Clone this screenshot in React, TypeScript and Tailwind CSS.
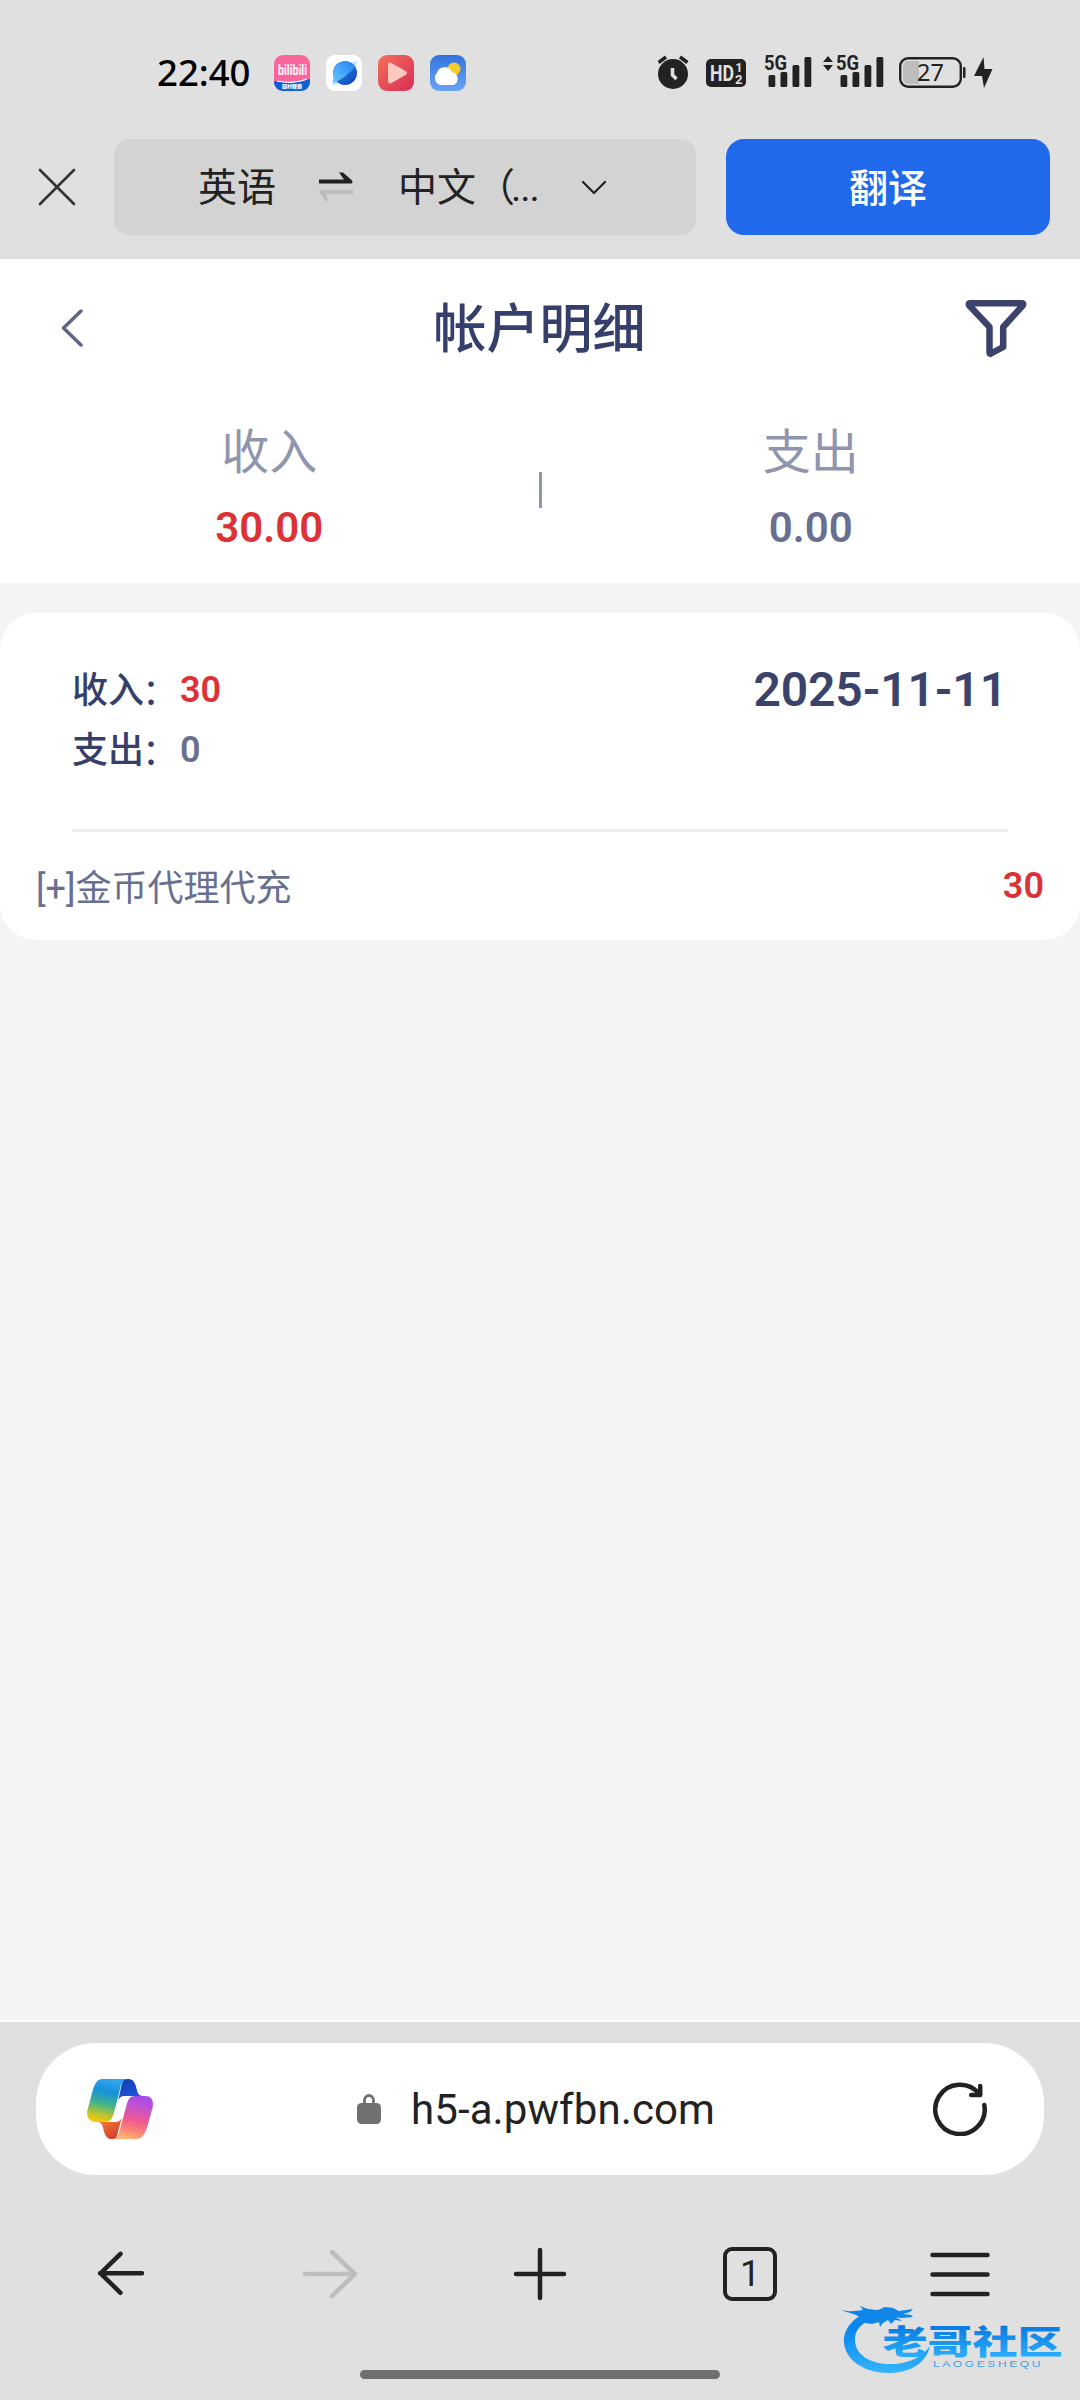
type Item = {
  name: string;
  amount: number;
};

type Day = {
  date: string;
  income: number;
  expense: number;
  items: Item[];
};

const days: Day[] = [
  { date: '2025-11-11', income: 30, expense: 0, items: [{ name: '[+]金币代理代充', amount: 30 }] },
];

function AppIcons() {
  return (
    <div className="ml-6 flex gap-4">
      <svg className="h-9 w-9 overflow-visible" viewBox="0 0 36 36">
        <defs>
          <clipPath id="biliClip"><rect width="36" height="36" rx="9" /></clipPath>
        </defs>
        <g clipPath="url(#biliClip)">
          <rect width="36" height="36" fill="#f8669b" />
          <path d="M0 26c10 2 24 2 36-2v12H0z" fill="#0d5fd8" />
          <path d="M3 26c9 2 20 2 30-2" stroke="#fff" strokeWidth="1.2" fill="none" />
        </g>
        <text x="4" y="20" fontSize="15" fontWeight="700" fill="#fff" textLength="29" lengthAdjust="spacingAndGlyphs" fontFamily="Roboto">bilibili</text>
        <text x="8" y="32.500" fontSize="5" fontWeight="900" fill="#fff" textLength="20" fontFamily="Noto Sans CJK SC">回村联赛</text>
      </svg>
      <svg className="h-9 w-9" viewBox="0 0 36 36">
        <defs>
          <linearGradient id="planet" x1="0" y1="0" x2="1" y2="1">
            <stop offset="0" stopColor="#2f9bf5" />
            <stop offset="1" stopColor="#0b3fb4" />
          </linearGradient>
          <linearGradient id="planetTop" x1="1" y1="0" x2="0" y2="1">
            <stop offset="0" stopColor="#1d84f0" />
            <stop offset="1" stopColor="#6cc4ff" />
          </linearGradient>
        </defs>
        <rect width="36" height="36" rx="9" fill="#fff" />
        <path d="M25 8c4-2 7-3 6-1 0 4-13 19-22 23-3 1-4-1-2-5z" fill="#c2e5ff" />
        <circle cx="19" cy="18" r="12" fill="url(#planet)" />
        <path d="M29 11.500A12 12 0 0 0 7.500 21L7 28C16 25 25 17 29 11.500z" fill="url(#planetTop)" />
      </svg>
      <svg className="h-9 w-9" viewBox="0 0 36 36">
        <defs>
          <linearGradient id="video" x1="0" y1="0" x2="1" y2="1">
            <stop offset="0" stopColor="#f5705a" />
            <stop offset="1" stopColor="#d92c56" />
          </linearGradient>
        </defs>
        <rect width="36" height="36" rx="9" fill="url(#video)" />
        <path d="M12 9.500v17l15-8.500z" fill="#fdc9bf" stroke="#fdc9bf" strokeWidth="4" strokeLinejoin="round" />
      </svg>
      <svg className="h-9 w-9" viewBox="0 0 36 36">
        <defs>
          <linearGradient id="sky" x1="0" y1="0" x2="0" y2="1">
            <stop offset="0" stopColor="#3273dc" />
            <stop offset="1" stopColor="#6aa2f8" />
          </linearGradient>
        </defs>
        <rect width="36" height="36" rx="9" fill="url(#sky)" />
        <circle cx="24" cy="14" r="6.500" fill="#f7cb2d" />
        <path d="M12 30a7 7 0 0 1-5-12 8 8 0 0 1 15-1 7 7 0 0 1 2 13z" fill="#fff" />
      </svg>
    </div>
  );
}

function SignalBars() {
  return (
    <svg className="h-[40px] w-[46px] overflow-visible" viewBox="0 -7 46 40" fill="#222">
      <text x="-1" y="15.500" fontSize="20.500" fontWeight="700" fontFamily="Roboto" textLength="23" lengthAdjust="spacingAndGlyphs">5G</text>
      <rect x="3.500" y="21" width="6.800" height="12" rx="1.500" />
      <rect x="15.500" y="18" width="6.800" height="15" rx="1.500" />
      <rect x="27.500" y="11" width="6.800" height="22" rx="1.500" />
      <rect x="39.500" y="3" width="6.800" height="30" rx="1.500" />
    </svg>
  );
}

function StatusBar() {
  return (
    <div className="flex h-[139px] items-start justify-between pr-[87px] pl-[157px]">
      <div className="flex pt-[55px]">
        <span className="w-[93px] font-['Noto_Sans',sans-serif] text-[36.500px] leading-[35px] font-medium text-black">22:40</span>
        <AppIcons />
      </div>
      <div className="flex pt-[54px]">
        {/* Alarm */}
        <svg className="mt-px h-[34px] w-[32px]" viewBox="0 0 32 34" fill="none">
          <circle cx="15" cy="19" r="15" fill="#222" />
          <path d="M.5 7.500 8 2M22 2l7.500 5.500" stroke="#222" strokeWidth="3.500" />
          <path d="M14.500 13v7l4 4" stroke="#e0e0e0" strokeWidth="3.500" />
        </svg>
        <svg className="mt-[5px] ml-[16px] h-7 w-10" viewBox="0 0 40 28">
          <rect width="40" height="28" rx="5" fill="#222" />
          <g fill="#e0e0e0" fontFamily="Roboto" fontWeight="700">
            <text x="4" y="22" fontSize="22" textLength="24" lengthAdjust="spacingAndGlyphs">HD</text>
            <text x="29.500" y="12.500" fontSize="12">1</text>
            <text x="29" y="25" fontSize="13">2</text>
          </g>
        </svg>
        <div className="-mt-[7px] ml-[19.500px]"><SignalBars /></div>
        <svg className="mt-[2px] ml-[12px] h-4 w-[10px]" viewBox="0 0 10 16" fill="#222">
          <path d="M0 6 5 0l5 6zM0 9h10l-5 6z" />
        </svg>
        <div className="-mt-[7px] ml-[4px]"><SignalBars /></div>
        <svg className="mt-[3px] ml-[16px] h-[31px] w-[67px]" viewBox="0 0 67 31">
          <path d="M9 4h11v23H9a5 5 0 0 1-5-5V9a5 5 0 0 1 5-5z" fill="#bdbdbd" />
          <rect x="1.200" y="1.200" width="60.600" height="28.600" rx="8" fill="none" stroke="#222" strokeWidth="2.400" />
          <rect x="64" y="10" width="2.500" height="11" rx="1" fill="#222" />
          <text x="31.500" y="23.500" textAnchor="middle" fontSize="23.500" fontFamily="Noto Sans" fill="#222">27</text>
        </svg>
        <svg className="mt-[3px] ml-[8px] h-[31px] w-[19px]" viewBox="0 0 19 31" fill="#222">
          <path d="M9.500 0 0 19h8L10 31l8.500-19H10.500z" />
        </svg>
      </div>
    </div>
  );
}

function TranslateBar() {
  return (
    <div className="flex h-[120px] items-start text-[39px] leading-[98px] text-[#222]">
      <svg className="mt-[29px] ml-[38px] h-[38px] w-[38px]" viewBox="0 0 38 38" fill="none" stroke="#333" strokeWidth="2.600" strokeLinecap="round">
        <path d="M2 2l34 34M36 2 2 36" />
      </svg>
      <div className="ml-[38px] flex h-24 w-[582px] items-center rounded-[15px] bg-[#d3d3d3]">
        <span className="ml-[84px] w-[78px] pt-[2px]">英语</span>
        <svg className="ml-[43px] h-8 w-[34px]" viewBox="0 0 34 32">
          <path d="M0 8.500h25L20 1.500h4L33 9.500c1 1.500.5 3-1 3H0z" fill="#222" />
          <path d="M34 19H2c-2 0-2.500 1.500-1.500 2.500L7 30h2l-2-7h27z" fill="#bbb" />
        </svg>
        <span className="ml-[45px] w-[145px] pt-[2px] whitespace-nowrap">中文（<span className="-ml-[4px] font-[Roboto] tracking-[-1px]">...</span></span>
        <svg className="ml-[38px] h-[15px] w-[26px]" viewBox="0 0 26 15" fill="none" stroke="#222" strokeWidth="2.200" strokeLinecap="round" strokeLinejoin="round">
          <path d="M2 2l11 11L24 2" />
        </svg>
      </div>
      <button className="ml-[30px] h-24 w-[324px] rounded-[18px] bg-[#2169eb] pt-px font-medium text-white">翻译</button>
    </div>
  );
}

function PageHeader() {
  return (
    <header className="h-[324px] bg-white">
      <div className="flex h-[138px] items-center justify-between pr-[53px] pl-[61px]">
        <svg className="h-[38px] w-[22px]" viewBox="0 0 22 38" fill="none" stroke="#5f6789" strokeWidth="3.500" strokeLinecap="round" strokeLinejoin="round">
          <path d="M20 2 2.500 19 20 36" />
        </svg>
        <h1 className="ml-[31px] pt-[4px] text-[53px] leading-none font-medium text-[#363f6b]">帐户明细</h1>
        <svg className="h-[58px] w-[62px]" viewBox="0 0 62 58" fill="none" stroke="#3b436c" strokeWidth="6.500" strokeLinejoin="round">
          <path d="M5 4.300h52c1.500 0 1.500 1.500.5 2.500L38.200 28v20L26 54.500c-1 .5-1.500 0-1.500-1V28L4.500 6.800c-1-1-1-2.500.5-2.500z" />
        </svg>
      </div>
      <div className="flex text-center">
        <div className="flex-1 pt-[28px]">
          <p className="text-[48px] leading-[56px] text-[#9095ae]">收入</p>
          <p className="mt-[22px] text-[42px] leading-[50px] font-semibold text-[#dc3236]">30.00</p>
        </div>
        <div className="mt-[75px] h-9 w-[3px] bg-[#9095a9]" />
        <div className="flex-1 pt-[28px]">
          <p className="text-[48px] leading-[56px] text-[#9095ae]">支出</p>
          <p className="mt-[22px] text-[42px] leading-[50px] font-semibold text-[#686f91]">0.00</p>
        </div>
      </div>
    </header>
  );
}

function DayCard({ day }: { day: Day }) {
  return (
    <section className="mt-[30px] h-[327px] rounded-[36px] bg-white">
      <div className="mx-[72px] flex h-[219px] justify-between border-b-[3px] border-[#efefef] pt-[47px]">
        <div className="text-[36px] leading-[60px] font-medium text-[#363f6b]">
          <p className="flex">
            <span className="pt-[2px] leading-[58px]">收入</span>
            <span className="-ml-[2px] w-[38px] pt-[6px] leading-[54px] font-normal">：</span>
            <b className="font-semibold text-[#dc3236]">{day.income}</b>
          </p>
          <p className="flex">
            <span className="pt-[2px] leading-[58px]">支出</span>
            <span className="-ml-[2px] w-[38px] pt-[6px] leading-[54px] font-normal">：</span>
            <b className="font-semibold text-[#686f91]">{day.expense}</b>
          </p>
        </div>
        <p className="pr-px text-[48px] leading-[60px] font-semibold tracking-[-0.1px] text-[#3b436c]">{day.date}</p>
      </div>
      {day.items.map((item) => (
        <div key={item.name} className="flex h-[108px] items-center justify-between px-9 text-[36px] leading-none">
          <span className="pt-[6px] text-[#686f91]">{item.name}</span>
          <span className="font-semibold text-[#dc3236]">{item.amount}</span>
        </div>
      ))}
    </section>
  );
}

function CopilotLogo() {
  return (
    <svg className="h-[60px] w-[66px]" viewBox="0 0 66 60">
      <defs>
        <linearGradient id="cpLeft" x1="0.600" y1="0" x2="0.400" y2="1">
          <stop offset="0" stopColor="#35a6ee" />
          <stop offset="0.300" stopColor="#1590dc" />
          <stop offset="0.600" stopColor="#45b48a" />
          <stop offset="0.850" stopColor="#bcc52c" />
          <stop offset="1" stopColor="#f4c80c" />
        </linearGradient>
        <linearGradient id="cpBlue" x1="0.300" y1="0" x2="0.700" y2="1">
          <stop offset="0" stopColor="#1440b4" />
          <stop offset="1" stopColor="#2258e6" />
        </linearGradient>
        <linearGradient id="cpRight" x1="0.600" y1="0" x2="0.400" y2="1">
          <stop offset="0" stopColor="#a34cea" />
          <stop offset="0.250" stopColor="#c552cf" />
          <stop offset="0.550" stopColor="#f0598f" />
          <stop offset="0.800" stopColor="#fb8575" />
          <stop offset="1" stopColor="#fdb472" />
        </linearGradient>
        <linearGradient id="cpOrange" x1="0" y1="0" x2="0.700" y2="1">
          <stop offset="0" stopColor="#fb8b35" />
          <stop offset="1" stopColor="#d33c30" />
        </linearGradient>
      </defs>
      <path d="M36 0h5c4 0 6 2 7.500 6l2 7c1 3 3 4 6 4H38c-4 0-6 2-7 5z" fill="url(#cpBlue)" />
      <path d="M29 60h-4c-4 0-6-2-7.500-6l-2-7c-1-3-3-4-6-4H28c4 0 6-2 7-5z" fill="url(#cpOrange)" />
      <path d="M15 0h26c-4 0-6 3-7.500 8l-6 24c-2 8-4 11-10 11H9c-7 0-10-5-8.500-12L5 14C7.500 5 10 0 15 0z" fill="url(#cpLeft)" />
      <path d="M50 60H25c4 0 6-3 7.500-8l6.500-24c2-8 4-11 9-11H58c7 0 9 5 7.500 12L61 45c-2.500 10-6 15-11 15z" fill="url(#cpRight)" />
    </svg>
  );
}

function BrowserBar() {
  return (
    <footer className="mt-auto h-[380px] border-t-2 border-white bg-[#e0e0e0] pt-[21px] text-[#222]">
      <div className="mx-9 flex h-[132px] items-center rounded-[60px] bg-white">
        <div className="ml-[51px]"><CopilotLogo /></div>
        <svg className="ml-[204px] h-[30px] w-6" viewBox="0 0 24 30">
          <rect y="9" width="24" height="21" rx="4.500" fill="#707070" />
          <path d="M7.500 12V6.500a4.500 5 0 0 1 9 0V12" fill="none" stroke="#707070" strokeWidth="2.800" />
        </svg>
        <span className="ml-[30px] w-[309px] pt-px text-[42px] leading-[60px] tracking-[0.1px]">h5-a.pwfbn.com</span>
        <svg className="ml-[213px] h-[54px] w-[54px]" viewBox="0 0 54 54" fill="none" stroke="#222" strokeWidth="4.500" strokeLinecap="round" strokeLinejoin="round">
          <path d="M51.300 23A24.700 24.700 0 1 1 46.500 12.200M47.200 4v9h-9" />
        </svg>
      </div>
      <nav className="mx-[15px] mt-[39px] grid h-[120px] grid-cols-5 place-items-center">
        <svg className="h-[60px] w-[60px]" viewBox="0 0 60 60" fill="none" stroke="#222" strokeWidth="4.500" strokeLinecap="round" strokeLinejoin="round">
          <path d="M52 29.300H10M30.500 9.800 10.500 29.300l20 19.500" />
        </svg>
        <svg className="h-[60px] w-[60px]" viewBox="0 0 60 60" fill="none" stroke="#bebebe" strokeWidth="4.500" strokeLinecap="round" strokeLinejoin="round">
          <path d="M5 30h50M32 8l23 22-23 22" />
        </svg>
        <svg className="h-[60px] w-[60px]" viewBox="0 0 60 60" fill="none" stroke="#222" strokeWidth="4.500" strokeLinecap="round">
          <path d="M6 30h48M30 6v48" />
        </svg>
        <span className="h-[54px] w-[54px] rounded-[9px] border-[4.500px] border-[#222] text-center text-[36px] leading-[47px]">1</span>
        <svg className="h-[60px] w-[60px]" viewBox="0 0 60 60" fill="none" stroke="#222" strokeWidth="4.500" strokeLinecap="round">
          <path d="M2.500 11h55M2.500 30.500h55M2.500 50h55" />
        </svg>
      </nav>
      <div className="mx-auto mt-[36px] h-[9px] w-[360px] rounded-full bg-[#707070]" />
    </footer>
  );
}

function Watermark() {
  return (
    <svg className="absolute right-[14px] bottom-[24px] h-[74px] w-[226px]" viewBox="0 0 226 74">
      <defs>
        <linearGradient id="wm" gradientUnits="userSpaceOnUse" x1="0" y1="0" x2="0" y2="72">
          <stop offset="0" stopColor="#1484e6" />
          <stop offset="0.400" stopColor="#0b88ee" />
          <stop offset="1" stopColor="#36b5fb" />
        </linearGradient>
        <linearGradient id="wmText" gradientUnits="userSpaceOnUse" x1="0" y1="25" x2="0" y2="54">
          <stop offset="0" stopColor="#0a7be2" />
          <stop offset="1" stopColor="#28adfb" />
        </linearGradient>
      </defs>
      <g fill="url(#wm)">
        {/* Dragon body and head */}
        <path d="M34 8C14 14 3 26 4 41c2 18 21 30 45 30 20 0 37-9 41-27-8 11-20 17-36 18-22 1-38-8-39-23C14 27 23 20 36 16z" />
        <path d="M2 8c7 2 14 1 21 0l-3-4 8 3 10 1 7-3 8 1 6 3 14-2-3 3-7 2 8 1 2 2-12 1-5-1 6 4-7-1-4 4-3-4-5 3-3 4-1-5-7 2-7-1C18 10 8 12 2 8z" />
      </g>
      <text x="42.500" y="52" fontSize="33" fontWeight="900" fill="url(#wmText)" textLength="180" lengthAdjust="spacingAndGlyphs" fontFamily="Noto Sans CJK SC">老哥社区</text>
      <text x="93" y="64.500" fontSize="9.500" fill="#3f9fe8" textLength="110" lengthAdjust="spacingAndGlyphs" letterSpacing="2" fontFamily="Liberation Sans">LAOGESHEQU</text>
    </svg>
  );
}

export default function App() {
  return (
    <div className="relative flex h-[2400px] w-[1080px] flex-col overflow-hidden bg-[#f4f4f4] font-[Roboto,'Noto_Sans_CJK_SC',sans-serif]">
      <div className="bg-[#e0e0e0]">
        <StatusBar />
        <TranslateBar />
      </div>
      <PageHeader />
      {days.map((day) => (
        <DayCard key={day.date} day={day} />
      ))}
      <BrowserBar />
      <Watermark />
    </div>
  );
}
